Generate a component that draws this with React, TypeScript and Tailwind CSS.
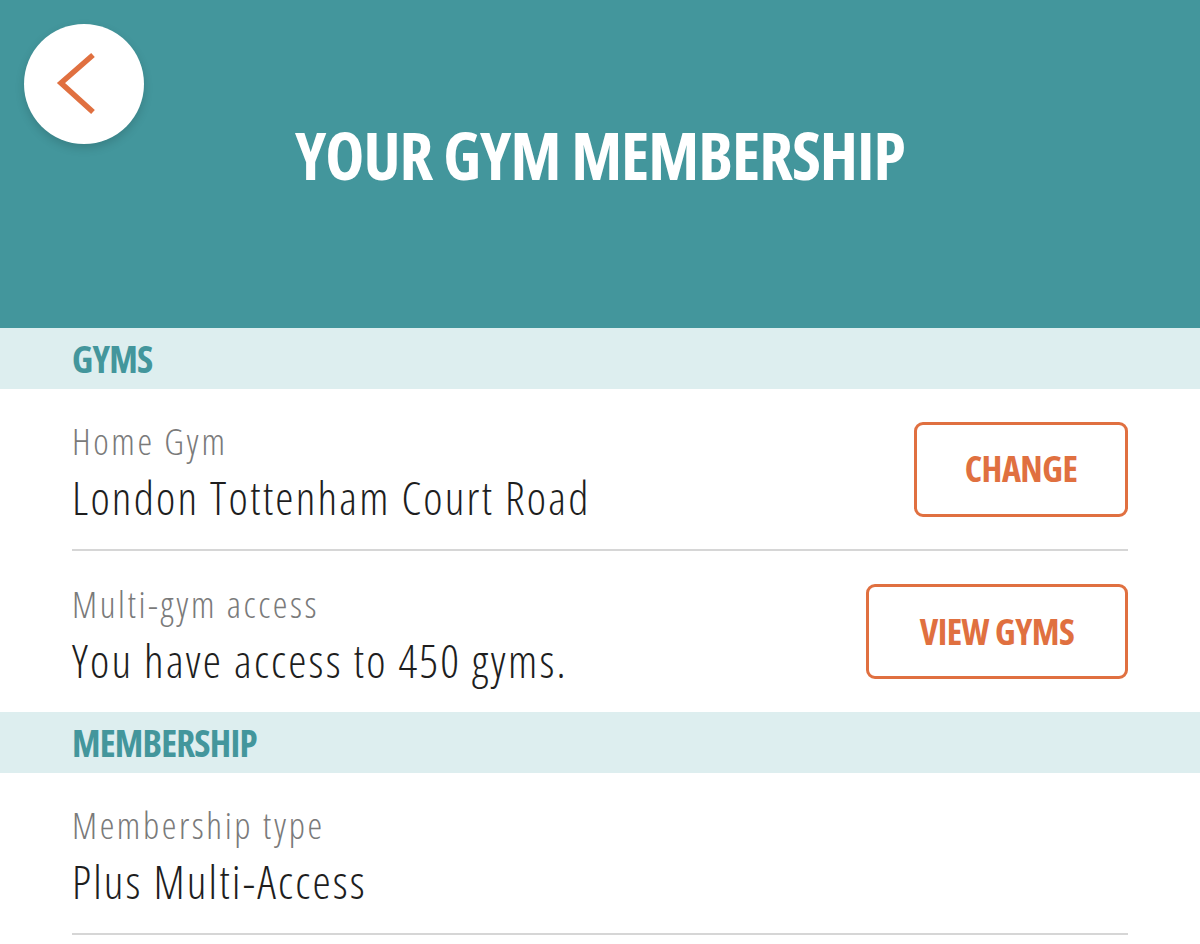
const FONT = { fontFamily: '"Open Sans", "Noto Sans", "Liberation Sans", sans-serif' };

function SectionBand({ title }: { title: string }) {
  return (
    <div className="flex h-[61px] items-center bg-[#ddeeef] px-[72px]">
      <h2 style={FONT} className="font-stretch-condensed text-[37px] font-bold leading-none tracking-[-0.8px] text-[#43969c]">
        {title}
      </h2>
    </div>
  );
}

function Row({
  label,
  value,
  action,
  actionWidth,
  divider = true,
}: {
  label: string;
  value: string;
  action?: string;
  actionWidth?: string;
  divider?: boolean;
}) {
  return (
    <div className="px-[72px]">
      <div
        className={`flex items-center justify-between ${divider ? 'h-[162px] border-b-2 border-[#d6d6d6]' : 'h-[161px]'}`}
      >
        <div style={FONT} className="flex flex-col font-stretch-condensed font-light">
          <span className="text-[37px] leading-[56px] tracking-[2.6px] text-[#7a7a7a]">{label}</span>
          <span className="text-[46px] leading-[56px] tracking-[2.2px] text-[#1e1e1e]">{value}</span>
        </div>
        {action && (
          <button
            style={FONT}
            className={`flex h-[95px] items-center justify-center rounded-[9px] border-[3px] border-[#e07040] bg-white font-stretch-condensed text-[36px] font-bold tracking-[-0.5px] text-[#e07040] ${actionWidth}`}
          >
            {action}
          </button>
        )}
      </div>
    </div>
  );
}

export default function App() {
  return (
    <div className="min-h-[944px] w-[1200px] overflow-hidden bg-white">
      <header className="relative flex h-[328px] items-start justify-center bg-[#43969c]">
        <button className="absolute left-[24px] top-[24px] h-[120px] w-[120px] rounded-full bg-white shadow-[0_4px_10px_rgba(0,0,0,0.15)]">
          <svg width="120" height="120" viewBox="0 0 120 120" className="absolute left-0 top-0">
            <polyline points="69,31 37,59 69,88" fill="none" stroke="#e07040" strokeWidth="5.5" />
          </svg>
        </button>
        <h1
          style={FONT}
          className="mt-[114px] font-stretch-condensed text-[66px] font-bold leading-[80px] tracking-[-1px] text-white"
        >
          YOUR GYM MEMBERSHIP
        </h1>
      </header>

      <SectionBand title="GYMS" />
      <Row label="Home Gym" value="London Tottenham Court Road" action="CHANGE" actionWidth="w-[214px]" />
      <Row
        label="Multi-gym access"
        value="You have access to 450 gyms."
        action="VIEW GYMS"
        actionWidth="w-[262px]"
        divider={false}
      />

      <SectionBand title="MEMBERSHIP" />
      <Row label="Membership type" value="Plus Multi-Access" />
    </div>
  );
}
